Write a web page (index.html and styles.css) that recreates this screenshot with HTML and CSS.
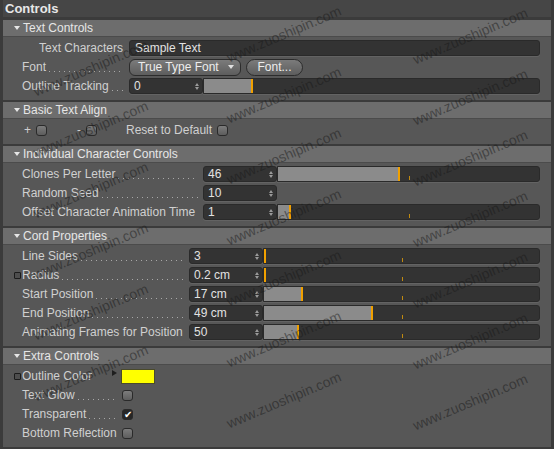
FILE: index.html
```html
<!DOCTYPE html>
<html lang="en">
<head>
    <meta charset="UTF-8">
    <title>Controls</title>
    <link rel="stylesheet" href="styles.css">
</head>
<body>
    <div class="panel">
        <div class="title">Controls</div>

        <!-- Text Controls -->
        <div class="group g-text">
            <div class="group-head"><span class="tri"></span>Text Controls</div>
            <div class="group-body">
                <div class="row">
                    <span class="key-slot"></span>
                    <span class="lbl lbl-right">Text Characters</span>
                    <div class="text-field">Sample Text</div>
                </div>
                <div class="row">
                    <span class="key-slot"></span>
                    <span class="lbl">Font<span class="dots"></span></span>
                    <div class="dropdown">True Type Font<span class="caret"></span></div>
                    <div class="btn">Font...</div>
                </div>
                <div class="row">
                    <span class="key-slot"></span>
                    <span class="lbl">Outline Tracking<span class="dots"></span></span>
                    <div class="num">0<span class="spin"></span></div>
                    <div class="slider"><div class="fill" style="width: 49px"></div></div>
                </div>
            </div>
        </div>

        <!-- Basic Text Align -->
        <div class="group">
            <div class="group-head"><span class="tri"></span>Basic Text Align</div>
            <div class="group-body">
                <div class="row align-row">
                    <span class="key-slot"></span>
                    <span class="a-plus">+</span><span class="check"></span>
                    <span class="a-minus">-</span><span class="check"></span>
                    <span class="a-reset">Reset to Default</span><span class="check"></span>
                </div>
            </div>
        </div>

        <!-- Individual Character Controls -->
        <div class="group g-indiv">
            <div class="group-head"><span class="tri"></span>Individual Character Controls</div>
            <div class="group-body">
                <div class="row">
                    <span class="key-slot"></span>
                    <span class="lbl">Clones Per Letter<span class="dots"></span></span>
                    <div class="num">46<span class="spin"></span></div>
                    <div class="slider"><div class="fill" style="width: 122px"></div><span class="tick"></span></div>
                </div>
                <div class="row">
                    <span class="key-slot"></span>
                    <span class="lbl">Random Seed<span class="dots"></span></span>
                    <div class="num">10<span class="spin"></span></div>
                </div>
                <div class="row">
                    <span class="key-slot"></span>
                    <span class="lbl">Offset Character Animation Time</span>
                    <div class="num">1<span class="spin"></span></div>
                    <div class="slider"><div class="fill" style="width: 13px"></div><span class="tick"></span></div>
                </div>
            </div>
        </div>

        <!-- Cord Properties -->
        <div class="group g-cord">
            <div class="group-head"><span class="tri"></span>Cord Properties</div>
            <div class="group-body">
                <div class="row">
                    <span class="key-slot"></span>
                    <span class="lbl">Line Sides<span class="dots"></span></span>
                    <div class="num">3<span class="spin"></span></div>
                    <div class="slider"><div class="fill" style="width: 2px"></div><span class="tick"></span></div>
                </div>
                <div class="row">
                    <span class="key-slot"><span class="key"></span></span>
                    <span class="lbl">Radius<span class="dots"></span></span>
                    <div class="num">0.2 cm<span class="spin"></span></div>
                    <div class="slider"><div class="fill" style="width: 2px"></div><span class="tick"></span></div>
                </div>
                <div class="row">
                    <span class="key-slot"></span>
                    <span class="lbl">Start Position<span class="dots"></span></span>
                    <div class="num">17 cm<span class="spin"></span></div>
                    <div class="slider"><div class="fill" style="width: 39px"></div><span class="tick"></span></div>
                </div>
                <div class="row">
                    <span class="key-slot"></span>
                    <span class="lbl">End Position<span class="dots"></span></span>
                    <div class="num">49 cm<span class="spin"></span></div>
                    <div class="slider"><div class="fill" style="width: 109px"></div><span class="tick"></span></div>
                </div>
                <div class="row">
                    <span class="key-slot"></span>
                    <span class="lbl">Animating Frames for Position</span>
                    <div class="num">50<span class="spin"></span></div>
                    <div class="slider"><div class="fill" style="width: 35px"></div><span class="tick"></span></div>
                </div>
            </div>
        </div>

        <!-- Extra Controls -->
        <div class="group g-extra">
            <div class="group-head"><span class="tri"></span>Extra Controls</div>
            <div class="group-body">
                <div class="row">
                    <span class="key-slot"><span class="key"></span></span>
                    <span class="lbl lbl-color">Outline Color</span>
                    <span class="expand"></span>
                    <span class="swatch"></span>
                </div>
                <div class="row">
                    <span class="key-slot"></span>
                    <span class="lbl">Text Glow<span class="dots"></span></span>
                    <span class="check"></span>
                </div>
                <div class="row">
                    <span class="key-slot"></span>
                    <span class="lbl">Transparent<span class="dots"></span></span>
                    <span class="check on">&#10004;</span>
                </div>
                <div class="row">
                    <span class="key-slot"></span>
                    <span class="lbl">Bottom Reflection</span>
                    <span class="check"></span>
                </div>
            </div>
        </div>

        <!-- watermark over the whole panel -->
        <div class="wm">
            <div class="wm-col wm-a">
                <span>www.zuoshipin.com</span><span>www.zuoshipin.com</span><span>www.zuoshipin.com</span>
                <span>www.zuoshipin.com</span><span>www.zuoshipin.com</span><span>www.zuoshipin.com</span>
            </div>
            <div class="wm-col wm-b">
                <span>www.zuoshipin.com</span><span>www.zuoshipin.com</span><span>www.zuoshipin.com</span>
                <span>www.zuoshipin.com</span><span>www.zuoshipin.com</span><span>www.zuoshipin.com</span>
                <span>www.zuoshipin.com</span>
            </div>
            <div class="wm-col wm-c">
                <span>www.zuoshipin.com</span><span>www.zuoshipin.com</span><span>www.zuoshipin.com</span>
                <span>www.zuoshipin.com</span><span>www.zuoshipin.com</span><span>www.zuoshipin.com</span>
                <span>www.zuoshipin.com</span>
            </div>
        </div>
    </div>
</body>
</html>
```

FILE: styles.css
```css
body {
    margin: 0;
    background: #3b3b3b;
    font-family: "Liberation Sans", Arial, sans-serif;
    font-size: 12px;
    color: #d0d0d0;
}
.panel {
    position: relative;
    width: 554px;
    height: 449px;
    box-sizing: border-box;
    padding: 0 3px;
    background: #3b3b3b;
    overflow: hidden;
}
.title {
    height: 17px;
    line-height: 17px;
    background: #464646;
    color: #e8e8e8;
    font-weight: bold;
    font-size: 13px;
    padding-left: 2px;
    margin-bottom: 3px;
}
.group + .group {
    margin-top: 2px;
}
.group-head {
    height: 17px;
    box-sizing: border-box;
    display: flex;
    align-items: center;
    padding-left: 11px;
    background: #6d6d6d;
    border-bottom: 1px solid #4b4b4b;
    color: #e6e6e6;
    font-size: 12px;
}
.tri {
    width: 0;
    height: 0;
    border-left: 3.5px solid transparent;
    border-right: 3.5px solid transparent;
    border-top: 4px solid #e6e6e6;
    margin-right: 3px;
}
.group-body {
    background: #575757;
    padding: 3px 0 6px;
    display: flex;
    flex-direction: column;
    gap: 3px;
}
.row {
    height: 16px;
    display: flex;
    align-items: center;
}
.key-slot {
    flex: none;
    width: 19px;
    display: flex;
    align-items: center;
}
.key {
    margin-left: 11px;
    width: 5px;
    height: 5px;
    border: 1px solid #1c1c1c;
    border-radius: 1px;
    background: #4e4e4e;
}
.lbl {
    flex: none;
    display: flex;
    align-items: center;
    white-space: nowrap;
    height: 16px;
}
.g-text .lbl { width: 107px; }
.g-indiv .lbl { width: 181px; }
.g-cord .lbl { width: 167px; }
.g-extra .lbl { width: 100px; }
.g-extra .lbl-color { width: 90px; }
.lbl-right {
    justify-content: flex-end;
    padding-right: 6px;
    box-sizing: border-box;
}
.dots {
    flex: 1;
    align-self: stretch;
    margin: 0 5px 0 3px;
    background-image: linear-gradient(to right, #a8a8a8 1px, transparent 1px);
    background-size: 5px 1px;
    background-repeat: repeat-x;
    background-position: left bottom 3px;
}

/* fields */
.text-field, .num, .slider {
    height: 16px;
    box-sizing: border-box;
    background: #333;
    border: 1px solid #2a2a2a;
    box-shadow: 0 1px 0 #636363;
    color: #e2e2e2;
}
.text-field {
    flex: 1;
    margin-right: 11px;
    border-radius: 3px;
    padding-left: 5px;
    line-height: 14px;
}
.num {
    flex: none;
    width: 74px;
    border-radius: 3px;
    display: flex;
    align-items: center;
    padding-left: 4px;
}
.spin {
    margin-left: auto;
    margin-right: 3px;
    display: flex;
    flex-direction: column;
    gap: 1px;
}
.spin::before, .spin::after {
    content: "";
    width: 0;
    height: 0;
    border-left: 2.5px solid transparent;
    border-right: 2.5px solid transparent;
}
.spin::before { border-bottom: 3px solid #9a9a9a; }
.spin::after { border-top: 3px solid #9a9a9a; }
.slider {
    position: relative;
    flex: 1;
    margin-right: 11px;
    border-radius: 0 3px 3px 0;
}
.fill {
    height: 100%;
    box-sizing: border-box;
    background: #8b8b8b;
    border-right: 2px solid #f0a000;
}
.tick {
    position: absolute;
    left: 50%;
    bottom: 1px;
    width: 1px;
    height: 4px;
    background: #c08a10;
}

/* buttons */
.dropdown, .btn {
    height: 17px;
    box-sizing: border-box;
    display: flex;
    align-items: center;
    border: 1px solid #2c2c2c;
    background: linear-gradient(#7b7b7b, #5d5d5d);
    color: #ededed;
}
.dropdown {
    width: 112px;
    border-radius: 6px;
    padding: 0 6px 0 8px;
}
.caret {
    margin-left: auto;
    width: 0;
    height: 0;
    border-left: 3.5px solid transparent;
    border-right: 3.5px solid transparent;
    border-top: 4px solid #e0e0e0;
}
.btn {
    width: 57px;
    margin-left: 5px;
    border-radius: 9px;
    justify-content: center;
}

/* checkboxes */
.check {
    flex: none;
    width: 11px;
    height: 11px;
    box-sizing: border-box;
    border: 1px solid #2a2a2a;
    border-radius: 3px;
    background: linear-gradient(#7c7c7c, #5d5d5d);
    color: #fff;
    font-size: 10px;
    line-height: 9px;
    text-align: center;
}
.check.on {
    background: #262626;
}
.a-plus { margin-left: 2px; margin-right: 5px; }
.a-minus { margin-left: 30px; margin-right: 5px; }
.a-reset { margin-left: 29px; margin-right: 5px; }

.expand {
    width: 0;
    height: 0;
    border-top: 3px solid transparent;
    border-bottom: 3px solid transparent;
    border-left: 5px solid #1e1e1e;
    margin-top: -6px;
}
.swatch {
    margin-left: 4px;
    width: 34px;
    height: 15px;
    box-sizing: border-box;
    background: #ffff00;
    border: 1px solid #4a4a2a;
}

/* watermark */
.wm {
    position: absolute;
    inset: 0;
    display: flex;
    pointer-events: none;
}
.wm-col {
    display: flex;
    flex-direction: column;
}
.wm-col span {
    height: 61px;
    flex: none;
    display: flex;
    align-items: center;
    justify-content: center;
    transform: rotate(-23deg);
    font-size: 14px;
    color: rgba(25, 25, 25, 0.5);
    white-space: nowrap;
}
.wm-a { width: 194px; margin-top: 37px; }
.wm-b { width: 220px; margin-top: 3px; }
.wm-c { width: 180px; margin-top: 5px; }
```
